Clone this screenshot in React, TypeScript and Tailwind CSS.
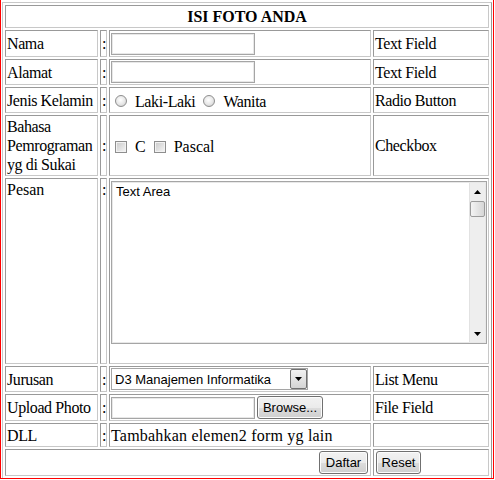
import React from "react";

const cell =
  "border border-solid border-t-[#999999] border-l-[#999999] border-r-[#c8c8c8] border-b-[#c8c8c8] p-[1px] align-middle";

function TextBox({ width = 144 }: { width?: number }) {
  return (
    <span
      className="inline-block h-[22px] border border-[#a5a5a5] bg-white shadow-[inset_0_0_0_1px_#e8e8e8] align-middle"
      style={{ width }}
    />
  );
}

function Radio() {
  return (
    <span className="inline-block w-[12px] h-[12px] rounded-full border border-[#8e8e8e] bg-[radial-gradient(circle_at_45%_40%,#ffffff_0%,#e6e6e6_55%,#c4c4c4_100%)]" />
  );
}

function Check() {
  return (
    <span className="inline-block w-[12px] h-[12px] border border-[#8e8e8e] bg-[linear-gradient(135deg,#c9c9c9,#f6f6f6)] shadow-[inset_0_0_0_1px_#f2f2f2]" />
  );
}

function Button({ label, width }: { label: string; width: number }) {
  return (
    <span
      className="inline-flex items-center justify-center h-[23px] rounded-[3px] border border-[#707070] bg-[linear-gradient(#f2f2f2_0%,#ebebeb_50%,#dddddd_51%,#cfcfcf_100%)] shadow-[inset_0_0_0_1px_#fcfcfc] font-['Liberation_Sans',sans-serif] text-[13px] leading-[15px] tracking-normal text-black align-middle"
      style={{ width }}
    >
      {label}
    </span>
  );
}

function Arrow({ down }: { down?: boolean }) {
  return (
    <svg width="7" height="4" viewBox="0 0 7 4">
      {down ? <path d="M0 0h7L3.5 4z" fill="#000" /> : <path d="M0 4h7L3.5 0z" fill="#000" />}
    </svg>
  );
}

function Label({ children }: { children: React.ReactNode }) {
  return <td className={cell + " whitespace-nowrap tracking-[-0.4px]"}>{children}</td>;
}

function Kind({ children }: { children?: React.ReactNode }) {
  return <td className={cell + " whitespace-nowrap tracking-[-0.4px]"}>{children}</td>;
}

function Colon({ top }: { top?: boolean }) {
  return <td className={cell + (top ? " !align-top" : "")}>:</td>;
}

export default function App() {
  return (
    <div className="w-[494px] h-[479px] overflow-hidden border-x border-b border-[#ff0000] pt-[2px] px-[1px] pb-[1px] bg-white font-['Liberation_Serif',serif] text-[16px] leading-[19px] text-black">
      <table className="w-[490px] h-[475px] table-fixed border-separate border-spacing-[2px] border border-solid border-t-[#c8c8c8] border-l-[#c8c8c8] border-r-[#999999] border-b-[#999999]">
        <colgroup>
          <col className="w-[93px]" />
          <col className="w-[7px]" />
          <col className="w-[262px]" />
          <col className="w-[116px]" />
        </colgroup>
        <tbody>
          <tr className="h-[23px]">
            <td colSpan={4} className={cell + " text-center font-bold"}>
              ISI FOTO ANDA
            </td>
          </tr>
          <tr className="h-[27px]">
            <Label>Nama</Label>
            <Colon />
            <td className={cell}>
              <TextBox />
            </td>
            <Kind>Text Field</Kind>
          </tr>
          <tr className="h-[26px]">
            <Label>Alamat</Label>
            <Colon />
            <td className={cell}>
              <TextBox />
            </td>
            <Kind>Text Field</Kind>
          </tr>
          <tr className="h-[26px]">
            <Label>Jenis Kelamin</Label>
            <Colon />
            <td className={cell + " tracking-[-0.4px]"}>
              <div className="flex items-center pl-[4px] pt-[2px]">
                <Radio />
                <span className="ml-[8px]">Laki-Laki</span>
                <span className="ml-[8px] flex">
                  <Radio />
                </span>
                <span className="ml-[8px]">Wanita</span>
              </div>
            </td>
            <Kind>Radio Button</Kind>
          </tr>
          <tr className="h-[60px]">
            <Label>
              Bahasa
              <br />
              Pemrograman
              <br />
              yg di Sukai
            </Label>
            <Colon />
            <td className={cell}>
              <div className="flex items-center pl-[4px] pt-[2px]">
                <Check />
                <span className="ml-[8px]">C</span>
                <span className="ml-[8px] flex">
                  <Check />
                </span>
                <span className="ml-[8px]">Pascal</span>
              </div>
            </td>
            <Kind>Checkbox</Kind>
          </tr>
          <tr className="h-[186px]">
            <td className={cell + " !align-top"}>Pesan</td>
            <Colon top />
            <td colSpan={2} className={cell + " !align-top"}>
              <div className="mt-[1px] flex h-[163px] w-full border border-[#a5a5a5] bg-white shadow-[inset_0_0_0_1px_#e8e8e8]">
                <div className="flex-1 pl-[4px] pt-[2px] font-['Liberation_Sans',sans-serif] text-[13px] leading-[15px]">
                  Text Area
                </div>
                <div className="my-[1px] mr-[1px] flex w-[16px] flex-col bg-[#eeeeee] border-l border-[#e2e2e2]">
                  <div className="flex h-[18px] items-center justify-center">
                    <Arrow />
                  </div>
                  <div className="h-[16px] rounded-[2px] border border-[#9b9b9b] bg-[linear-gradient(90deg,#f4f4f4,#d6d6d6)]" />
                  <div className="flex-1" />
                  <div className="flex h-[17px] items-center justify-center">
                    <Arrow down />
                  </div>
                </div>
              </div>
            </td>
          </tr>
          <tr className="h-[26px]">
            <Label>Jurusan</Label>
            <Colon />
            <td className={cell}>
              <div className="flex h-[22px] w-[197px] items-center border border-[#a5a5a5] bg-white">
                <span className="flex-1 pl-[3px] font-['Liberation_Sans',sans-serif] text-[13px]">
                  D3 Manajemen Informatika
                </span>
                <span className="flex h-[20px] w-[17px] items-center justify-center rounded-[2px] border border-[#707070] bg-[linear-gradient(#f2f2f2,#d4d4d4)]">
                  <Arrow down />
                </span>
              </div>
            </td>
            <Kind>List Menu</Kind>
          </tr>
          <tr className="h-[27px]">
            <Label>Upload Photo</Label>
            <Colon />
            <td className={cell}>
              <div className="flex items-center gap-[2px]">
                <TextBox />
                <Button label="Browse..." width={66} />
              </div>
            </td>
            <Kind>File Field</Kind>
          </tr>
          <tr className="h-[24px]">
            <Label>DLL</Label>
            <Colon />
            <td className={cell + " whitespace-nowrap tracking-[0.2px]"}>Tambahkan elemen2 form yg lain</td>
            <Kind />
          </tr>
          <tr className="h-[26px]">
            <td colSpan={3} className={cell + " text-right"}>
              <span className="mr-[1px] inline-flex">
                <Button label="Daftar" width={49} />
              </span>
            </td>
            <td className={cell}>
              <span className="ml-[1px] inline-flex">
                <Button label="Reset" width={45} />
              </span>
            </td>
          </tr>
        </tbody>
      </table>
    </div>
  );
}
